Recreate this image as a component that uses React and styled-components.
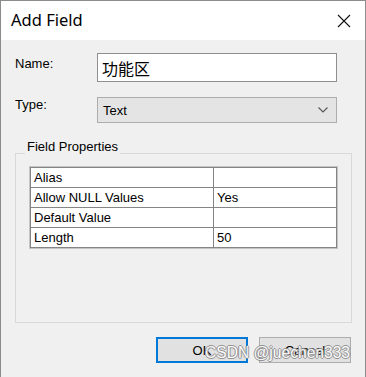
import styled, { createGlobalStyle } from "styled-components"

const GlobalStyle = createGlobalStyle`
	html, body {
		margin: 0;
		padding: 0;
		background: #6e6e6e;
	}
	* {
		box-sizing: border-box;
	}
`

const Window = styled.div`
	width: 366px;
	height: 377px;
	display: flex;
	flex-direction: column;
	border: 1px solid #8c8c8c;
	border-bottom: none;
	background: #f0f0f0;
	font-family: "Liberation Sans", Arial, sans-serif;
	font-size: 13px;
	color: #000;
	position: relative;
	overflow: hidden;
`

const TitleBar = styled.div`
	height: 39px;
	flex: none;
	background: #fff;
	display: flex;
	align-items: center;
	justify-content: space-between;
	padding: 0 14px 0 10px;
`

const Title = styled.span`
	font-family: "Noto Sans", "Open Sans", sans-serif;
	font-size: 16.5px;
	padding-bottom: 2px;
`

const CloseIcon = styled.svg`
	width: 14px;
	height: 14px;
	display: block;
`

const Content = styled.div`
	flex: 1;
	display: flex;
	flex-direction: column;
	padding: 13px 13px 0 14px;
`

const Row = styled.div`
	display: flex;
	align-items: flex-start;
	margin-top: ${(props) => props.gap || 0}px;
`

const Label = styled.label`
	width: 82px;
	padding-top: ${(props) => props.offset || 0}px;
	line-height: 15px;
`

const NameInput = styled.div`
	width: 240px;
	height: 29px;
	background: #fff;
	border: 1px solid #8f8f8f;
	padding-left: 4px;
	display: flex;
	align-items: center;
	font-family: "Noto Sans CJK SC", sans-serif;
	font-size: 16px;
`

const Select = styled.div`
	width: 240px;
	height: 26px;
	background: #e4e4e4;
	border: 1px solid #adadad;
	padding: 0 8px 0 5px;
	display: flex;
	align-items: center;
	justify-content: space-between;
`

const Chevron = styled.svg`
	width: 10px;
	height: 6px;
	display: block;
`

const GroupBox = styled.div`
	position: relative;
	margin-top: 30px;
	height: 170px;
	border: 1px solid #d9d9d9;
	padding: 13px 0 0 14px;
`

const Legend = styled.span`
	position: absolute;
	top: -14px;
	left: 9px;
	padding: 0 2px;
	line-height: 14px;
	background: #f0f0f0;
`

const Table = styled.table`
	border-collapse: collapse;
	width: 307px;
	box-shadow: 0 0 0 1px #c4c4c4;
	background: #fff;
`

const Cell = styled.td`
	border: 1px solid #858585;
	height: 20px;
	padding: 0 3px;
	line-height: 16px;
	width: ${(props) => props.w || "auto"};
`

const Buttons = styled.div`
	display: flex;
	justify-content: flex-end;
	gap: 11px;
	margin-top: 14px;
	padding-right: 1px;
`

const Button = styled.div`
	width: 92px;
	height: 26px;
	display: flex;
	align-items: center;
	justify-content: center;
	background: #e1e1e1;
	border: ${(props) => (props.primary ? "2px solid #0078d7" : "1px solid #adadad")};
`

const Watermark = styled.div`
	position: absolute;
	left: 204px;
	top: 343px;
	font-family: "Liberation Sans", Arial, sans-serif;
	font-size: 15.6px;
	color: #fff;
	white-space: nowrap;
	text-shadow: -1px 0 #8a8a8a, 1px 0 #8a8a8a, 0 -1px #8a8a8a, 0 1px #8a8a8a;
	opacity: 0.9;
	pointer-events: none;
`

const rows = [
	["Alias", ""],
	["Allow NULL Values", "Yes"],
	["Default Value", ""],
	["Length", "50"],
]

const App = () => {
	return (
		<>
			<GlobalStyle />
			<Window>
				<TitleBar>
					<Title>Add Field</Title>
					<CloseIcon viewBox="0 0 14 14">
						<path d="M1 1L13 13M13 1L1 13" stroke="#111" strokeWidth="1.1" fill="none" />
					</CloseIcon>
				</TitleBar>
				<Content>
					<Row>
						<Label offset={3}>Name:</Label>
						<NameInput>功能区</NameInput>
					</Row>
					<Row gap={15}>
						<Label offset={0}>Type:</Label>
						<Select>
							<span>Text</span>
							<Chevron viewBox="0 0 10 6">
								<path d="M0.5 0.5L5 5L9.5 0.5" stroke="#555" strokeWidth="1.1" fill="none" />
							</Chevron>
						</Select>
					</Row>
					<GroupBox>
						<Legend>Field Properties</Legend>
						<Table>
							<tbody>
								{rows.map(([name, value]) => (
									<tr key={name}>
										<Cell w="183px">{name}</Cell>
										<Cell>{value}</Cell>
									</tr>
								))}
							</tbody>
						</Table>
					</GroupBox>
					<Buttons>
						<Button primary>OK</Button>
						<Button>Cancel</Button>
					</Buttons>
				</Content>
				<Watermark>CSDN @juechen333</Watermark>
			</Window>
		</>
	)
}

export default App
